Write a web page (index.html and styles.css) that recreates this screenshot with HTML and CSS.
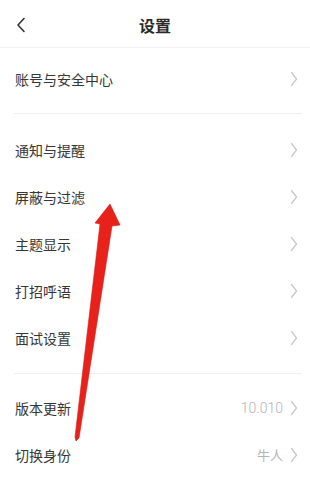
FILE: index.html
```html
<!DOCTYPE html>
<html lang="zh-CN">
<head>
<meta charset="utf-8">
<title>设置</title>
<link rel="stylesheet" href="styles.css">
</head>
<body>
<div class="page">
  <header class="header">
    <svg class="back" width="10" height="16" viewBox="0 0 10 16"><path d="M8 1.5 L2 8 L8 14.5" fill="none" stroke="#333" stroke-width="1.6" stroke-linecap="round" stroke-linejoin="round"/></svg>
    <h1 class="title">设置</h1>
  </header>

  <section class="group g1">
    <div class="row"><span class="label">账号与安全中心</span><span class="right"><svg class="chev" width="8" height="16" viewBox="0 0 8 16"><path d="M1.5 1.5 L6.5 8 L1.5 14.5" fill="none" stroke="#c9c9c9" stroke-width="1.3" stroke-linecap="round" stroke-linejoin="round"/></svg></span></div>
  </section>
  <div class="sep"></div>

  <section class="group g2">
    <div class="row"><span class="label">通知与提醒</span><span class="right"><svg class="chev" width="8" height="16" viewBox="0 0 8 16"><path d="M1.5 1.5 L6.5 8 L1.5 14.5" fill="none" stroke="#c9c9c9" stroke-width="1.3" stroke-linecap="round" stroke-linejoin="round"/></svg></span></div>
    <div class="row"><span class="label">屏蔽与过滤</span><span class="right"><svg class="chev" width="8" height="16" viewBox="0 0 8 16"><path d="M1.5 1.5 L6.5 8 L1.5 14.5" fill="none" stroke="#c9c9c9" stroke-width="1.3" stroke-linecap="round" stroke-linejoin="round"/></svg></span></div>
    <div class="row"><span class="label">主题显示</span><span class="right"><svg class="chev" width="8" height="16" viewBox="0 0 8 16"><path d="M1.5 1.5 L6.5 8 L1.5 14.5" fill="none" stroke="#c9c9c9" stroke-width="1.3" stroke-linecap="round" stroke-linejoin="round"/></svg></span></div>
    <div class="row"><span class="label">打招呼语</span><span class="right"><svg class="chev" width="8" height="16" viewBox="0 0 8 16"><path d="M1.5 1.5 L6.5 8 L1.5 14.5" fill="none" stroke="#c9c9c9" stroke-width="1.3" stroke-linecap="round" stroke-linejoin="round"/></svg></span></div>
    <div class="row"><span class="label">面试设置</span><span class="right"><svg class="chev" width="8" height="16" viewBox="0 0 8 16"><path d="M1.5 1.5 L6.5 8 L1.5 14.5" fill="none" stroke="#c9c9c9" stroke-width="1.3" stroke-linecap="round" stroke-linejoin="round"/></svg></span></div>
  </section>
  <div class="sep"></div>

  <section class="group g3">
    <div class="row"><span class="label">版本更新</span><span class="right"><span class="value num">10.010</span><svg class="chev" width="8" height="16" viewBox="0 0 8 16"><path d="M1.5 1.5 L6.5 8 L1.5 14.5" fill="none" stroke="#c9c9c9" stroke-width="1.3" stroke-linecap="round" stroke-linejoin="round"/></svg></span></div>
    <div class="row"><span class="label">切换身份</span><span class="right"><span class="value">牛人</span><svg class="chev" width="8" height="16" viewBox="0 0 8 16"><path d="M1.5 1.5 L6.5 8 L1.5 14.5" fill="none" stroke="#c9c9c9" stroke-width="1.3" stroke-linecap="round" stroke-linejoin="round"/></svg></span></div>
  </section>

  <svg class="arrow" width="310" height="488" viewBox="0 0 310 488">
    <polygon points="110,204 120,225 112,226 79,438 76,441 75,437 100,224 95,223" fill="#e8211b" stroke="#d41a15" stroke-width="0.6" stroke-linejoin="round"/>
  </svg>
</div>
</body>
</html>
```

FILE: styles.css
```css
html, body {
  margin: 0;
  padding: 0;
  background: #ffffff;
}

.page {
  position: relative;
  width: 310px;
  height: 488px;
  overflow: hidden;
  font-family: "Noto Sans CJK SC", "Noto Sans", sans-serif;
  color: #333333;
}

.header {
  position: relative;
  height: 47px;
  border-bottom: 1px solid #f3f3f3;
  display: flex;
  align-items: center;
  justify-content: center;
}

.back {
  position: absolute;
  left: 16px;
  top: 17px;
}

.title {
  margin: 0;
  font-size: 16px;
  font-weight: 700;
  color: #2a2a2a;
  line-height: 1;
  margin-top: 3px;
}

.group {
  display: flex;
  flex-direction: column;
}

.g1 {
  padding: 7px 0 11px;
}

.g2 {
  padding: 12px 0 12px;
}

.g3 {
  padding: 10px 0 0;
}

.sep {
  height: 1px;
  background: #f0f0f0;
  margin: 0 8px 0 14px;
}

.row {
  height: 47px;
  display: flex;
  align-items: center;
  justify-content: space-between;
  padding: 0 12px 0 15px;
}

.label {
  font-size: 14px;
  color: #363636;
  letter-spacing: 0;
}

.right {
  display: flex;
  align-items: center;
  gap: 7px;
}

.value {
  font-size: 13px;
  color: #b4b4b4;
}

.num {
  font-family: Roboto, "Noto Sans", sans-serif;
  font-weight: 300;
  font-size: 14px;
}

.chev {
  display: block;
}

.arrow {
  position: absolute;
  left: 0;
  top: 0;
  pointer-events: none;
}
```
